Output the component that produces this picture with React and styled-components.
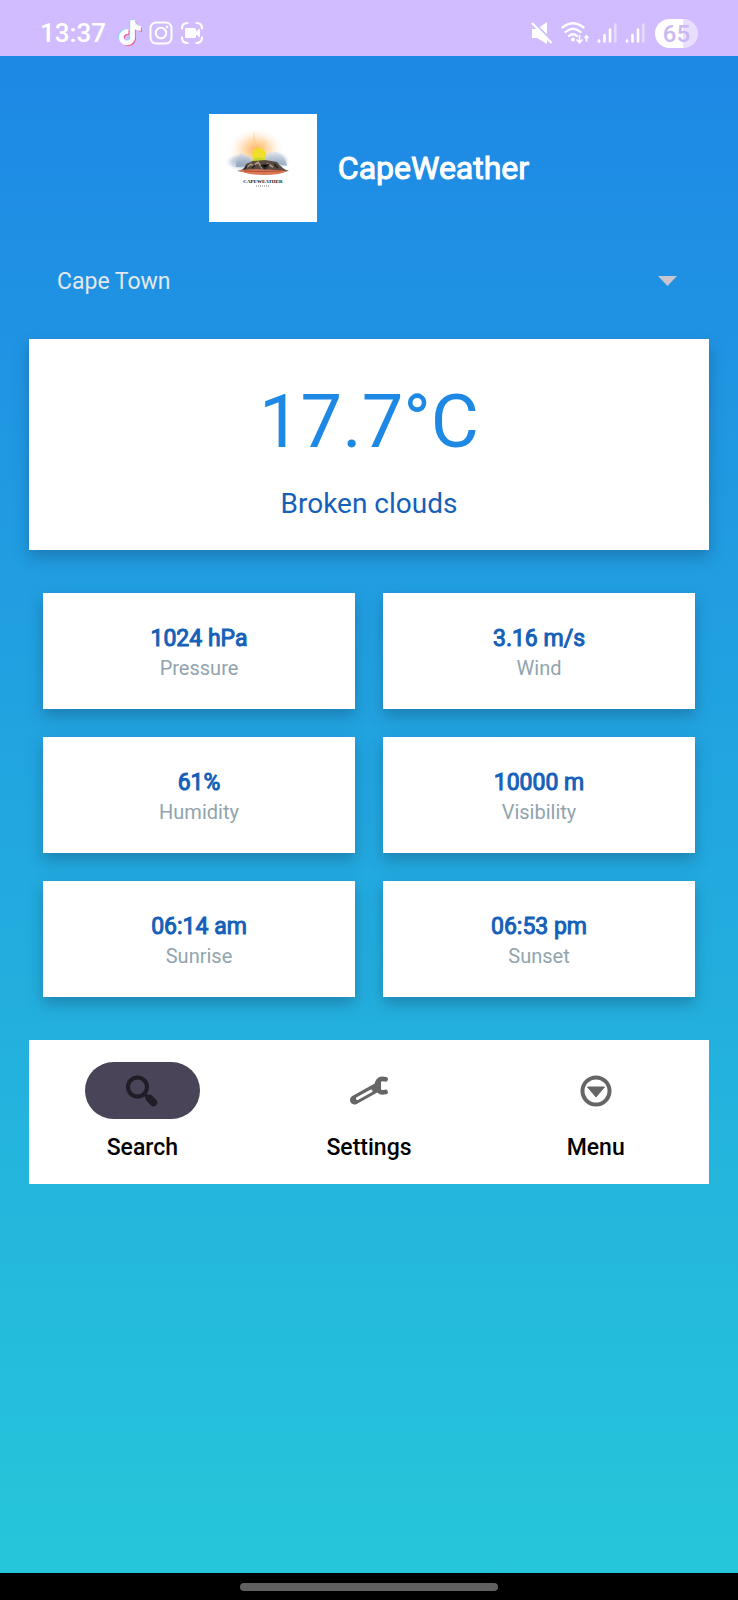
import React from "react";
import styled, { createGlobalStyle } from "styled-components";

const GlobalStyle = createGlobalStyle`
  *, *::before, *::after { box-sizing: border-box; }
  body {
    margin: 0;
    background: #000;
    font-family: Roboto, "Liberation Sans", sans-serif;
  }
`;

const Screen = styled.div`
  display: flex;
  flex-direction: column;
  min-height: 100vh;
`;

const StatusBar = styled.div`
  display: flex;
  justify-content: space-between;
  align-items: center;
  height: 56px;
  padding: 10px 40px 0;
  background: #d0bcff;
  color: #fff;
`;

const StatusGroup = styled.div`
  display: flex;
  align-items: center;
  gap: ${(p) => p.$gap}px;
`;

const Clock = styled.time`
  margin-right: 5px;
  font-size: 26px;
  font-weight: 500;
  line-height: 32px;
`;

const Battery = styled.span`
  width: 43px;
  height: 29px;
  margin-left: 2px;
  border-radius: 15px;
  background: linear-gradient(90deg, #fff 65%, #e9defe 65%);
  color: #cbb9f4;
  font-size: 24px;
  font-weight: 500;
  line-height: 30px;
  text-align: center;
`;

const Main = styled.main`
  flex: 1;
  display: flex;
  flex-direction: column;
  padding: 58px 29px 28px;
  background: linear-gradient(#1e88e5, #26c6da);
`;

const Header = styled.header`
  display: flex;
  justify-content: center;
  align-items: center;
  gap: 21px;
`;

const Title = styled.h1`
  margin: 0;
  color: #fff;
  font-size: 32px;
  font-weight: 400;
  -webkit-text-stroke: 1px currentColor;
  line-height: 40px;
`;

const CityPicker = styled.label`
  display: flex;
  align-items: center;
  height: 72px;
  margin: 23px 0 22px;
  padding-right: 32px;
`;

const CitySelect = styled.select`
  flex: 1;
  height: 72px;
  padding: 2px 28px 0;
  border: 0;
  appearance: none;
  background: transparent;
  color: #e3e8ee;
  font: 400 23px/32px Roboto, "Liberation Sans", sans-serif;
`;

const Card = styled.section`
  display: flex;
  flex-direction: column;
  align-items: center;
  background: #fff;
  box-shadow: 0 7px 14px rgba(20, 60, 90, 0.34);
`;

const CurrentCard = styled(Card)`
  gap: 22px;
  padding: 40px 16px 29px;
`;

const Temperature = styled.p`
  margin: 0;
  color: #1e88e5;
  font-size: 74px;
  line-height: 86px;
`;

const Condition = styled.p`
  margin: 0;
  color: #1560b8;
  font-size: 28px;
  line-height: 34px;
`;

const StatGrid = styled.div`
  display: grid;
  grid-template-columns: 1fr 1fr;
  gap: 28px;
  margin: 43px 14px;
`;

const StatCard = styled(Card)`
  padding: 31px 16px 27px;
`;

const StatValue = styled.strong`
  color: #1560b8;
  font-size: 23px;
  font-weight: 400;
  -webkit-text-stroke: 1px currentColor;
  line-height: 30px;
`;

const StatLabel = styled.span`
  color: #90a4ae;
  font-size: 20px;
  line-height: 28px;
`;

const BottomNav = styled.nav`
  display: grid;
  grid-template-columns: repeat(3, 1fr);
  background: #fff;
`;

const NavButton = styled.button`
  display: flex;
  flex-direction: column;
  align-items: center;
  gap: 15px;
  padding: 22px 0;
  border: 0;
  background: none;
  color: #000;
  font: 500 23px/28px Roboto, "Liberation Sans", sans-serif;
`;

const NavIcon = styled.span`
  display: flex;
  align-items: center;
  justify-content: center;
  width: 115px;
  height: 57px;
  border-radius: 29px;
  background: ${(p) => (p.$active ? "#4a4458" : "transparent")};
  color: ${(p) => (p.$active ? "#201d26" : "#666")};
`;

const GestureBar = styled.div`
  display: flex;
  justify-content: center;
  align-items: center;
  height: 27px;
  background: #000;
`;

const GestureHandle = styled.div`
  width: 35%;
  height: 8px;
  border-radius: 4px;
  background: #606060;
`;

const NOTE =
  "M448 209.91a210.06 210.06 0 0 1-122.77-39.25V349.38A162.55 162.55 0 1 1 185 188.31V278.2a74.62 74.62 0 1 0 52.23 71.18V0l88 0a121.18 121.18 0 0 0 1.86 22.17h0A122.18 122.18 0 0 0 381 102.39a121.43 121.43 0 0 0 67 20.14Z";

function TiktokIcon() {
  return (
    <svg width="24" height="28" viewBox="-25 -20 500 560" aria-hidden="true">
      <path d={NOTE} fill="#6fdcec" transform="translate(-22 -16)" />
      <path d={NOTE} fill="#e0507f" transform="translate(24 22)" />
      <path d={NOTE} fill="#fff" stroke="#fff" strokeWidth="16" />
    </svg>
  );
}

function InstagramIcon() {
  return (
    <svg width="24" height="24" viewBox="0 0 24 24" fill="none" stroke="#fff" strokeWidth="2" aria-hidden="true">
      <rect x="1.5" y="1.5" width="21" height="21" rx="5.5" />
      <circle cx="12" cy="12" r="5.3" />
      <circle cx="18" cy="6" r="1.4" fill="#fff" stroke="none" />
    </svg>
  );
}

function CaptureIcon() {
  return (
    <svg width="24" height="24" viewBox="0 0 24 24" fill="none" stroke="#fff" strokeWidth="2.2" strokeLinecap="round" aria-hidden="true">
      <path d="M2 7.5Q2 2 7.5 2M16.500 2Q22 2 22 7.500M22 16.500Q22 22 16.500 22M7.500 22Q2 22 2 16.500" />
      <rect x="5" y="7" width="11" height="10" rx="1.500" fill="#fff" stroke="none" />
      <path d="M15 11l5-3.500v9L15 13z" fill="#fff" stroke="none" />
    </svg>
  );
}

function MuteIcon() {
  return (
    <svg width="22" height="22" viewBox="0 0 22 22" aria-hidden="true">
      <path d="M1 7h5l10-7v22l-10-6H1z" fill="#fff" />
      <path d="M2.500 0L22 20" stroke="#d0bcff" strokeWidth="2" />
      <path d="M1 1l19.500 20" stroke="#fff" strokeWidth="2.200" />
    </svg>
  );
}

function WifiIcon() {
  return (
    <svg width="28" height="22" viewBox="0 0 28 22" fill="none" stroke="#fff" strokeWidth="2.300" strokeLinecap="round" aria-hidden="true">
      <path d="M1.500 5.500Q12 -3 22.500 5.500M4.500 10Q12 3.500 19.500 10M8 14Q12 10.500 16 14" />
      <circle cx="12" cy="17.500" r="1.900" fill="#fff" stroke="none" />
      <path d="M18.500 13.500v7M16 18l2.500 2.700L21 18M25.500 19v-5M24 15.500l1.500-1.500L27 15.500" strokeWidth="1.700" />
    </svg>
  );
}

function SignalIcon() {
  return (
    <svg width="20" height="22" viewBox="0 0 20 22" stroke="#fff" strokeWidth="2.600" strokeLinecap="round" aria-hidden="true">
      <path d="M2 18.500v1M7.500 13v6.500M13 7.500v12" />
      <path d="M18.300 2.500v17" opacity="0.450" />
    </svg>
  );
}

function CapeLogo() {
  return (
    <svg width="108" height="108" viewBox="0 0 108 108" role="img" aria-label="CapeWeather logo">
      <defs>
        <radialGradient id="glow">
          <stop offset="0" stopColor="#ffae4a" stopOpacity="1" />
          <stop offset="0.500" stopColor="#ffcf98" stopOpacity="0.600" />
          <stop offset="1" stopColor="#fff" stopOpacity="0" />
        </radialGradient>
        <radialGradient id="mist">
          <stop offset="0" stopColor="#8fa5bd" stopOpacity="0.900" />
          <stop offset="0.600" stopColor="#b6c4d3" stopOpacity="0.700" />
          <stop offset="1" stopColor="#e8edf3" stopOpacity="0" />
        </radialGradient>
        <linearGradient id="cloud" x2="0" y2="1">
          <stop offset="0" stopColor="#dfe6ef" />
          <stop offset="1" stopColor="#8299b3" />
        </linearGradient>
      </defs>
      <rect width="108" height="108" fill="#fff" />
      <ellipse cx="47" cy="36" rx="29" ry="23" fill="url(#glow)" />
      <path d="M42 39l3-22 3 18 10-10-5 13z" fill="#ffca85" opacity="0.400" />
      <ellipse cx="33" cy="48" rx="17" ry="9" fill="url(#mist)" />
      <ellipse cx="67" cy="47" rx="14" ry="10" fill="url(#mist)" />
      <circle cx="50" cy="41" r="7" fill="#efdf2b" />
      <path d="M27 53q0-9 5-14l5 4 6 4 3 5zM55 47q1-7 7-9 8-1 11 5 4 2 5 9z" fill="url(#cloud)" opacity="0.800" />
      <path d="M42 47q8-7 17 0z" fill="#c9d829" />
      <path d="M28 57q8-1 9-7l7-3 12-1 12 2q5 7 12 9-25 4-52 0z" fill="#594a42" />
      <path d="M37 54l5-4 2 2 5-4 4 6 6-4 5 3" fill="none" stroke="#b19a87" strokeWidth="1.500" />
      <path d="M43 54l3-3M52 51l4 4 4-5M65 50l4 4M35 56l3-4" stroke="#262a2c" strokeWidth="2" />
      <path d="M30 56q20-2 48 1-6 4-23 4-19 0-25-5z" fill="#dc7655" />
      <path d="M35 57q16 1 37 0" fill="none" stroke="#a94d36" strokeWidth="1" />
      <text x="54" y="69" textAnchor="middle" fontFamily="Liberation Serif, serif" fontWeight="700" fontSize="5" fill="#111">CAPEWEATHER</text>
      <path d="M47 72h14" stroke="#777" strokeDasharray="1 1" />
    </svg>
  );
}

function SearchIcon() {
  return (
    <svg width="36" height="36" viewBox="0 0 36 36" fill="none" stroke="currentColor" aria-hidden="true">
      <circle cx="13.500" cy="14" r="9.500" strokeWidth="4" />
      <path d="M20 20.500l4 4" strokeWidth="3.500" />
      <path d="M25.500 25.500l4 4" strokeWidth="7.500" strokeLinecap="round" />
    </svg>
  );
}

function WrenchIcon() {
  return (
    <svg width="40" height="36" viewBox="0 0 40 36" fill="none" strokeLinecap="round" aria-hidden="true">
      <path d="M5.500 27L27 15" stroke="currentColor" strokeWidth="9" />
      <path d="M36.500 6.300Q29 4 28 12.500q1 8.500 8.500 6.500" stroke="currentColor" strokeWidth="4.800" />
      <path d="M28 6q-5 6-1 13l5-1V7z" fill="currentColor" />
      <path d="M8.500 25.500L22 18" stroke="#fff" strokeWidth="3" />
    </svg>
  );
}

function MenuIcon() {
  return (
    <svg width="36" height="36" viewBox="0 0 36 36" aria-hidden="true">
      <circle cx="18" cy="18" r="13.500" fill="none" stroke="currentColor" strokeWidth="4" />
      <path d="M9.500 14h17l-8.500 10z" fill="currentColor" stroke="currentColor" strokeLinejoin="round" />
    </svg>
  );
}

const stats = [
  ["1024 hPa", "Pressure"],
  ["3.16 m/s", "Wind"],
  ["61%", "Humidity"],
  ["10000 m", "Visibility"],
  ["06:14 am", "Sunrise"],
  ["06:53 pm", "Sunset"],
];

const tabs = [
  ["Search", SearchIcon],
  ["Settings", WrenchIcon],
  ["Menu", MenuIcon],
];

export default function App() {
  return (
    <Screen>
      <GlobalStyle />
      <StatusBar>
        <StatusGroup $gap={7}>
          <Clock>13:37</Clock>
          <TiktokIcon />
          <InstagramIcon />
          <CaptureIcon />
        </StatusGroup>
        <StatusGroup $gap={8}>
          <MuteIcon />
          <WifiIcon />
          <SignalIcon />
          <SignalIcon />
          <Battery>65</Battery>
        </StatusGroup>
      </StatusBar>
      <Main>
        <Header>
          <CapeLogo />
          <Title>CapeWeather</Title>
        </Header>
        <CityPicker>
          <CitySelect aria-label="City" defaultValue="Cape Town">
            <option>Cape Town</option>
          </CitySelect>
          <svg width="19" height="10" viewBox="0 0 19 10" aria-hidden="true">
            <path d="M0 0h19l-9.500 10z" fill="#cac4d0" />
          </svg>
        </CityPicker>
        <CurrentCard>
          <Temperature>17.7°C</Temperature>
          <Condition>Broken clouds</Condition>
        </CurrentCard>
        <StatGrid>
          {stats.map(([value, label]) => (
            <StatCard key={label}>
              <StatValue>{value}</StatValue>
              <StatLabel>{label}</StatLabel>
            </StatCard>
          ))}
        </StatGrid>
        <BottomNav>
          {tabs.map(([label, Icon], i) => (
            <NavButton key={label} type="button">
              <NavIcon $active={i === 0}>
                <Icon />
              </NavIcon>
              {label}
            </NavButton>
          ))}
        </BottomNav>
      </Main>
      <GestureBar>
        <GestureHandle />
      </GestureBar>
    </Screen>
  );
}
